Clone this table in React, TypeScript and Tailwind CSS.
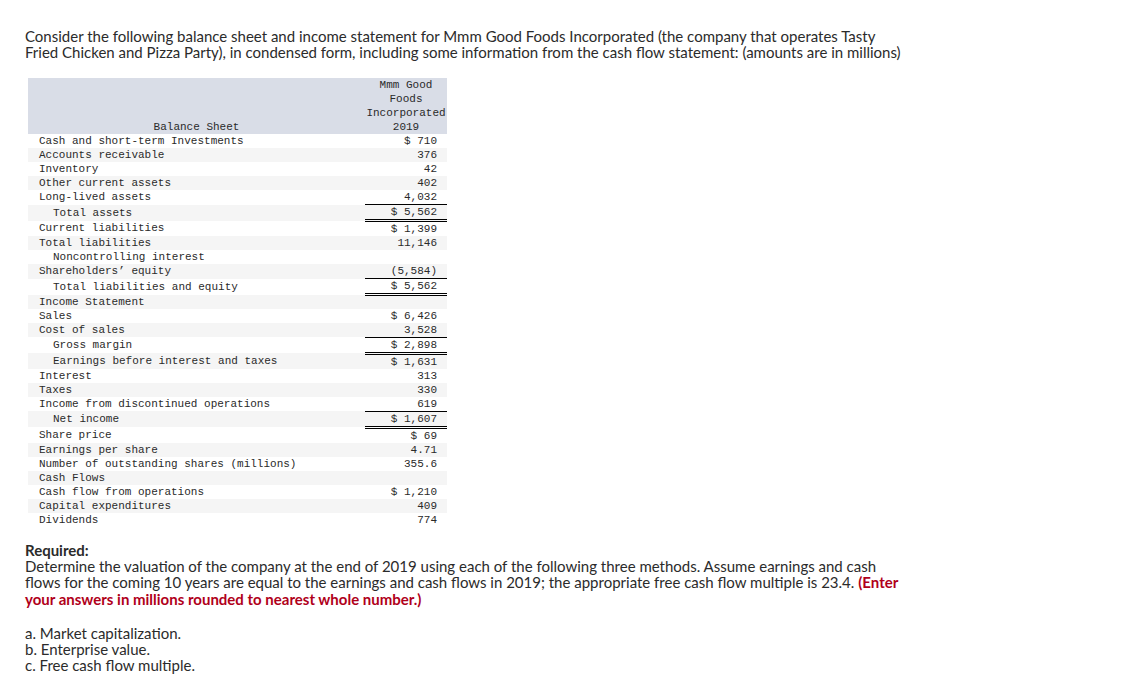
import React from 'react';

type Row = {
  label: string;
  value?: string;
  indent?: boolean;
  line?: 'single' | 'double';
};

const rows: Row[] = [
  { label: 'Cash and short-term Investments', value: '$ 710' },
  { label: 'Accounts receivable', value: '376' },
  { label: 'Inventory', value: '42' },
  { label: 'Other current assets', value: '402' },
  { label: 'Long-lived assets', value: '4,032', line: 'single' },
  { label: 'Total assets', value: '$ 5,562', indent: true, line: 'double' },
  { label: 'Current liabilities', value: '$ 1,399' },
  { label: 'Total liabilities', value: '11,146' },
  { label: 'Noncontrolling interest', indent: true },
  { label: 'Shareholders’ equity', value: '(5,584)', line: 'single' },
  { label: 'Total liabilities and equity', value: '$ 5,562', indent: true, line: 'double' },
  { label: 'Income Statement' },
  { label: 'Sales', value: '$ 6,426' },
  { label: 'Cost of sales', value: '3,528', line: 'single' },
  { label: 'Gross margin', value: '$ 2,898', indent: true, line: 'double' },
  { label: 'Earnings before interest and taxes', value: '$ 1,631', indent: true },
  { label: 'Interest', value: '313' },
  { label: 'Taxes', value: '330' },
  { label: 'Income from discontinued operations', value: '619', line: 'single' },
  { label: 'Net income', value: '$ 1,607', indent: true, line: 'double' },
  { label: 'Share price', value: '$ 69' },
  { label: 'Earnings per share', value: '4.71' },
  { label: 'Number of outstanding shares (millions)', value: '355.6' },
  { label: 'Cash Flows' },
  { label: 'Cash flow from operations', value: '$ 1,210' },
  { label: 'Capital expenditures', value: '409' },
  { label: 'Dividends', value: '774' },
];

function FinancialTable() {
  return (
    <table className="ml-[3px] border-collapse font-['Liberation_Mono',monospace] text-[11px] leading-[14px] text-[#2a2a2a]">
      <thead>
        <tr className="bg-[#d9dde7]">
          <th className="w-[337px] px-0 align-bottom font-normal text-center">Balance Sheet</th>
          <th className="w-[82px] font-normal text-center">
            Mmm Good
            <br />
            Foods
            <br />
            Incorporated
            <br />
            2019
          </th>
        </tr>
      </thead>
      <tbody>
        {rows.map((r, i) => (
          <tr key={r.label} className={i % 2 === 1 ? 'bg-[#f5f5f5]' : 'bg-white'}>
            <td className={`${r.indent ? 'pl-[25px]' : 'pl-[11px]'} whitespace-pre`}>{r.label}</td>
            <td
              className={`pr-[10px] text-right whitespace-pre ${
                r.line === 'single'
                  ? 'border-b border-black'
                  : r.line === 'double'
                  ? 'border-b-[3px] border-double border-black'
                  : ''
              }`}
            >
              {r.value ?? ''}
            </td>
          </tr>
        ))}
      </tbody>
    </table>
  );
}

export default function App() {
  return (
    <div className="min-h-screen bg-white px-[25px] pt-[28px] font-['Lato',sans-serif] text-[15px] leading-[16px] text-[#2b2b2b]">
      <p>
        Consider the following balance sheet and income statement for Mmm Good Foods Incorporated (the company that operates Tasty
        <br />
        Fried Chicken and Pizza Party), in condensed form, including some information from the cash flow statement: (amounts are in millions)
      </p>
      <div className="mt-[18px]">
        <FinancialTable />
      </div>
      <div className="mt-[15px]">
        <p className="font-bold">Required:</p>
        <p className="leading-[16.5px]">
          Determine the valuation of the company at the end of 2019 using each of the following three methods. Assume earnings and cash
          <br />
          flows for the coming 10 years are equal to the earnings and cash flows in 2019; the appropriate free cash flow multiple is 23.4.{' '}
          <span className="font-bold text-[#b0001a]">(Enter</span>
          <br />
          <span className="font-bold text-[#b0001a]">your answers in millions rounded to nearest whole number.)</span>
        </p>
        <div className="mt-[18px] leading-[16px]">
          <p>a. Market capitalization.</p>
          <p>b. Enterprise value.</p>
          <p>c. Free cash flow multiple.</p>
        </div>
      </div>
    </div>
  );
}
